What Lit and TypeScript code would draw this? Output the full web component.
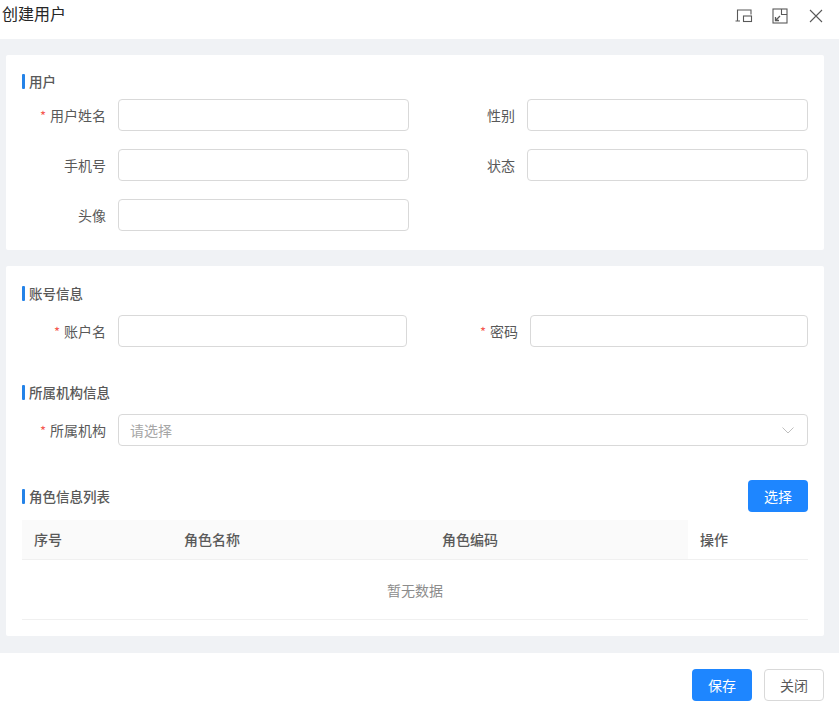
import { LitElement, html, css } from "lit";
import { customElement } from "lit/decorators.js";

@customElement("app-root")
export class AppRoot extends LitElement {
  static styles = css`
    :host {
      display: flex;
      flex-direction: column;
      width: 839px;
      height: 713px;
      overflow: hidden;
      background: #fff;
      font-family: "Noto Sans CJK SC", "Noto Sans", sans-serif;
      font-size: 14px;
      color: #595959;
    }
    * { box-sizing: border-box; }
    .header {
      height: 39px;
      flex: none;
      display: flex;
      justify-content: space-between;
      padding-left: 2px;
    }
    .title {
      font-size: 16px;
      line-height: 26px;
      color: #262626;
    }
    .tools { display: flex; padding: 6px 13px 0 0; gap: 16px; }
    .tools svg { width: 20px; height: 20px; display: block; }
    .body {
      flex: 1;
      background: #f0f2f5;
      padding: 16px 15px 17px 6px;
      display: flex;
      flex-direction: column;
      gap: 16px;
    }
    .card {
      background: #fff;
      border-radius: 2px;
      padding: 18px 16px 0;
    }
    .card.first { height: 195px; }
    .card.second { height: 370px; padding-top: 19px; }
    .sec {
      display: flex;
      align-items: center;
      height: 16px;
      font-size: 13.5px;
      font-weight: 500;
      color: #595959;
      gap: 4px;
    }
    .sec::before {
      content: "";
      width: 3px;
      height: 15px;
      border-radius: 1px;
      background: #2483e8;
    }
    .grid {
      display: grid;
      row-gap: 18px;
      margin-top: 10px;
    }
    .grid.a { grid-template-columns: 387px 1fr; column-gap: 12px; }
    .grid.b { grid-template-columns: 385px 1fr; column-gap: 12px; }
    .field {
      display: grid;
      align-items: center;
      column-gap: 12px;
      height: 32px;
    }
    .w96 { grid-template-columns: 84px 1fr; }
    .grid.a .field.right { grid-template-columns: 95px 1fr; margin-left: -1px; }
    .grid.b .field.right { grid-template-columns: 99px 1fr; }
    label { text-align: right; color: #595959; white-space: nowrap; }
    .req::before {
      content: "*";
      color: #f5584f;
      margin-right: 4px;
      font-size: 13px;
    }
    .input {
      height: 32px;
      border: 1px solid #d9d9d9;
      border-radius: 4px;
      background: #fff;
    }
    .select {
      display: flex;
      align-items: center;
      justify-content: space-between;
      padding: 0 12px 0 11px;
      color: #a6a6a6;
    }
    .select svg { width: 14px; height: 14px; }
    .spaced { margin-top: 37px; }
    .listhead {
      margin-top: 34px;
      display: flex;
      justify-content: space-between;
      align-items: center;
      height: 32px;
    }
    .btn {
      height: 32px;
      width: 60px;
      border-radius: 4px;
      border: 1px solid transparent;
      background: #1e86ff;
      color: #fff;
      font: inherit;
      padding: 0;
    }
    .btn.ghost {
      background: #fff;
      border-color: #d9d9d9;
      color: #595959;
    }
    .table { margin-top: 8px; }
    .row {
      display: grid;
      grid-template-columns: 150px 258px 258px 120px;
      height: 40px;
      border-bottom: 1px solid #f0f0f0;
      align-items: center;
      font-weight: 500;
    }
    .row span { padding-left: 12px; height: 39px; line-height: 39px; background: #fafafa; color: #595959; }
    .row span:last-child { background: #fff; }
    .empty {
      height: 60px;
      border-bottom: 1px solid #f0f0f0;
      display: flex;
      align-items: center;
      justify-content: center;
      color: #8c8c8c;
    }
    .footer {
      height: 60px;
      flex: none;
      display: flex;
      justify-content: flex-end;
      gap: 12px;
      padding: 16px 15px 0 0;
    }
  `;

  render() {
    return html`
      <div class="header">
        <div class="title">创建用户</div>
        <div class="tools">
          <svg viewBox="0 0 20 20" fill="none" stroke="#595959" stroke-width="1.1">
            <path d="M4.5 16V4.5H18V9M7 15.5H2.5" transform="translate(-1 -0.5)" />
            <rect x="9.5" y="10" width="8" height="5.5" />
          </svg>
          <svg viewBox="0 0 20 20" fill="none" stroke="#595959" stroke-width="1.1">
            <rect x="3" y="3" width="14" height="14" />
            <path d="M11.5 3V8.5H17" />
            <path d="M10 10L5.5 14.5M5.5 11V14.5H9" stroke-width="1.3" />
          </svg>
          <svg viewBox="0 0 20 20" fill="none" stroke="#595959" stroke-width="1.1">
            <path d="M4 4L16 16M16 4L4 16" />
          </svg>
        </div>
      </div>
      <div class="body">
        <section class="card first">
          <div class="sec">用户</div>
          <div class="grid a">
            <div class="field w96"><label class="req">用户姓名</label><div class="input"></div></div>
            <div class="field right"><label>性别</label><div class="input"></div></div>
            <div class="field w96"><label>手机号</label><div class="input"></div></div>
            <div class="field right"><label>状态</label><div class="input"></div></div>
            <div class="field w96"><label>头像</label><div class="input"></div></div>
          </div>
        </section>
        <section class="card second">
          <div class="sec">账号信息</div>
          <div class="grid b" style="margin-top:14px">
            <div class="field w96"><label class="req">账户名</label><div class="input"></div></div>
            <div class="field right"><label class="req">密码</label><div class="input"></div></div>
          </div>
          <div class="sec spaced">所属机构信息</div>
          <div class="field w96" style="margin-top:14px">
            <label class="req">所属机构</label>
            <div class="input select">
              <span>请选择</span>
              <svg viewBox="0 0 14 14" fill="none" stroke="#bfbfbf" stroke-width="1"><path d="M1.5 4.5L7 10L12.5 4.5" /></svg>
            </div>
          </div>
          <div class="listhead">
            <div class="sec">角色信息列表</div>
            <button class="btn">选择</button>
          </div>
          <div class="table">
            <div class="row">
              <span>序号</span><span>角色名称</span><span>角色编码</span><span>操作</span>
            </div>
            <div class="empty">暂无数据</div>
          </div>
        </section>
      </div>
      <div class="footer">
        <button class="btn">保存</button>
        <button class="btn ghost">关闭</button>
      </div>
    `;
  }
}
